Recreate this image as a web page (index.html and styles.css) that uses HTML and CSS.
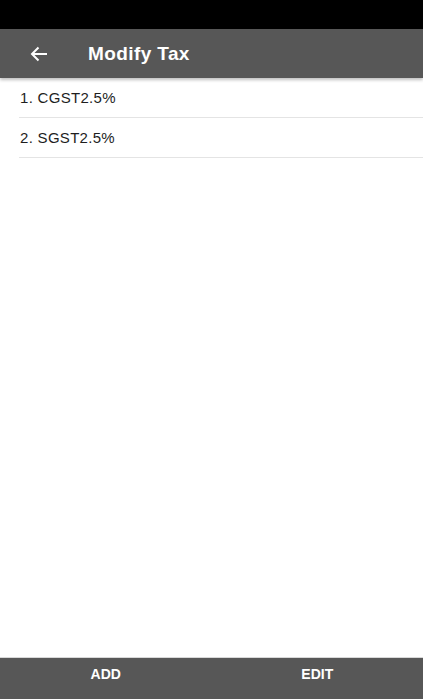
FILE: index.html
```html
<!DOCTYPE html>
<html lang="en">
<head>
    <meta charset="UTF-8">
    <meta name="viewport" content="width=device-width, initial-scale=1.0">
    <title>Modify Tax</title>
    <link rel="stylesheet" href="styles.css">
</head>
<body>
    <div class="screen">
        <div class="status-bar"></div>
        <div class="toolbar">
            <svg class="back" width="18" height="16" viewBox="0 0 18 16">
                <path d="M17 8H2M8.5 1.5L2 8l6.5 6.5" fill="none" stroke="#fff" stroke-width="2"/>
            </svg>
            <h1 class="title">Modify Tax</h1>
        </div>
        <ul class="tax-list">
            <li class="tax-row">1. CGST2.5%</li>
            <li class="tax-row">2. SGST2.5%</li>
        </ul>
        <div class="bottom-bar">
            <button class="bar-btn">ADD</button>
            <button class="bar-btn">EDIT</button>
        </div>
    </div>
</body>
</html>
```
FILE: styles.css
```css
body{
    margin: 0;
    background: #fff;
    font-family: "Liberation Sans", Arial, sans-serif;
}
.screen{
    height: 699px;
    display: flex;
    flex-direction: column;
}
.status-bar{
    height: 29px;
    background: #000;
}
.toolbar{
    height: 49px;
    background: #575757;
    display: flex;
    align-items: center;
    padding-left: 30px;
    box-shadow: 0 2px 3px rgba(0,0,0,0.25);
    position: relative;
    z-index: 1;
}
.back{
    display: block;
}
.title{
    margin: 0 0 0 40px;
    color: #fff;
    font-size: 19px;
    font-weight: bold;
    letter-spacing: 0.4px;
}
.tax-list{
    flex: 1;
    list-style: none;
    margin: 0;
    padding: 0 0 0 19px;
}
.tax-row{
    height: 39px;
    display: flex;
    align-items: center;
    padding-left: 1px;
    border-bottom: 1px solid #e4e4e4;
    font-size: 15px;
    letter-spacing: 0.3px;
    color: #1e1e1e;
}
.bottom-bar{
    height: 41px;
    background: #575757;
    border-top: 1px solid #d8d8d8;
    display: grid;
    grid-template-columns: 1fr 1fr;
}
.bar-btn{
    background: none;
    border: 0;
    padding: 8px 0 0;
    align-self: start;
    color: #fff;
    font-family: "Liberation Sans", Arial, sans-serif;
    font-size: 14px;
    font-weight: bold;
}
```
